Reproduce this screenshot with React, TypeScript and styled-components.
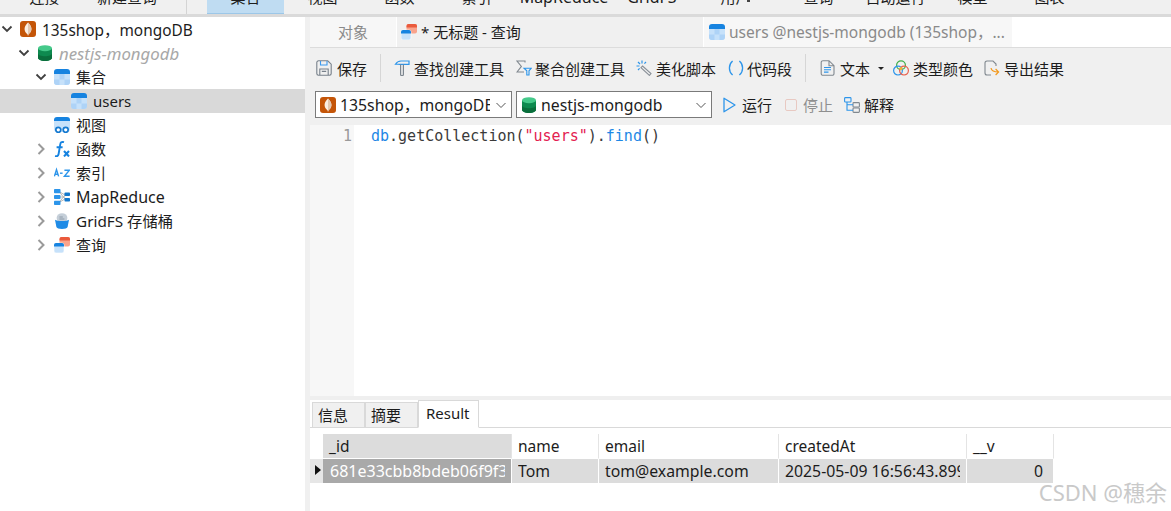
import React from 'react';
import styled, { createGlobalStyle } from 'styled-components';

const GlobalStyle = createGlobalStyle`
  html, body {
    margin: 0;
    padding: 0;
    background: #ffffff;
  }
  body {
    font-family: "Noto Sans", "Noto Sans CJK SC", sans-serif;
    font-size: 15px;
    color: #1c1c1c;
  }
`;

/* ---------- icons ---------- */

const MongoIcon = () => (
  <svg width="16" height="16" viewBox="0 0 16 16">
    <rect x="0" y="0" width="16" height="16" rx="3" fill="#c45508" />
    <path d="M8 1.5C5.2 4.2 4.4 6.5 4.6 8.6 4.8 11 6.4 12.6 7.6 13.4L8 15l.4-1.6c1.2-.8 2.8-2.4 3-4.8.2-2.1-.6-4.4-3.4-7.1z" fill="#fbeee2" />
    <path d="M8 1.5v13.5l.4-1.6c1.2-.8 2.8-2.4 3-4.8.2-2.1-.6-4.4-3.4-7.1z" fill="#e3c9b2" />
  </svg>
);

const DbIcon = () => (
  <svg width="16" height="16" viewBox="0 0 16 16">
    <path d="M1 3.2v9.6C1 14.6 4.2 16 8 16s7-1.4 7-3.2V3.2z" fill="#0e8a4f" />
    <path d="M1 8.2v4.6C1 14.6 4.2 16 8 16s7-1.4 7-3.2V8.2C15 10 11.8 11.2 8 11.2S1 10 1 8.2z" fill="#0a6e3c" />
    <ellipse cx="8" cy="3.2" rx="7" ry="3" fill="#45c98a" />
  </svg>
);

const TableIcon = () => (
  <svg width="16" height="16" viewBox="0 0 16 16">
    <path d="M0 5h16v8a3 3 0 0 1-3 3H3a3 3 0 0 1-3-3z" fill="#c6e1fa" />
    <path d="M5.5 5h5v5.5h-5z" fill="#aed3f7" />
    <path d="M0 10.5h5.5V16H3a3 3 0 0 1-3-3zM10.5 10.5H16V13a3 3 0 0 1-3 3h-2.5z" fill="#aed3f7" />
    <path d="M3 0h10a3 3 0 0 1 3 3v2H0V3a3 3 0 0 1 3-3z" fill="#1683e0" />
  </svg>
);

const ViewIcon = () => (
  <svg width="16" height="16" viewBox="0 0 16 16">
    <path d="M0 4h16v8a3 3 0 0 1-3 3H3a3 3 0 0 1-3-3z" fill="#c6e1fa" />
    <path d="M3 0h10a3 3 0 0 1 3 3v1H0V3a3 3 0 0 1 3-3z" fill="#1683e0" />
    <circle cx="4.3" cy="12.8" r="2.5" fill="#fff" stroke="#1479d0" strokeWidth="1.7" />
    <circle cx="11.7" cy="12.8" r="2.5" fill="#fff" stroke="#1479d0" strokeWidth="1.7" />
  </svg>
);

const FxIcon = () => (
  <svg width="16" height="16" viewBox="0 0 16 16" fill="none">
    <path d="M10 1.2C7.4.4 6.6 1.6 6.2 3.6L4.6 13c-.3 1.8-1.4 2.5-3.6 2.1M2.6 6.2h6" stroke="#1683e0" strokeWidth="1.9" />
    <path d="M10 10l5 5.4M15 10l-5 5.4" stroke="#1683e0" strokeWidth="2.1" />
  </svg>
);

const SortIcon = () => (
  <svg width="16" height="16" viewBox="0 0 16 16" fill="none" stroke="#2d95ea" strokeWidth="1.4">
    <path d="M.4 11.4 2.5 4.6l2.1 6.8M1 9.2h3" />
    <path d="M6 8.2h2.6" />
    <path d="M10.4 5.2h5l-5 6h5.2" />
  </svg>
);

const MapReduceIcon = () => (
  <svg width="16" height="16" viewBox="0 0 16 16" fill="none">
    <path d="M5 2.5 11 6M5 8h6M5 13.5 11 10M5 2.5 11 10M5 13.5 11 6" stroke="#b0b0b0" strokeWidth=".9" />
    <rect x="0" y="0" width="6.5" height="4.2" rx=".8" fill="#2c95ea" />
    <rect x="0" y="5.9" width="6.5" height="4.2" rx=".8" fill="#2c95ea" />
    <rect x="0" y="11.8" width="6.5" height="4.2" rx=".8" fill="#2c95ea" />
    <rect x="10.5" y="3.4" width="5.5" height="3.6" rx=".8" fill="#1478cc" />
    <rect x="10.5" y="9" width="5.5" height="3.6" rx=".8" fill="#1478cc" />
  </svg>
);

const BucketIcon = () => (
  <svg width="16" height="16" viewBox="0 0 16 16">
    <ellipse cx="8" cy="5" rx="5.4" ry="4.8" fill="#c4ced8" />
    <path d="M5.4 4h3.4M5.4 6h5" stroke="#7f8e9c" strokeWidth=".8" />
    <path d="M1 6.8c2 1.6 12 1.6 14 0l-1.4 7.2c-.3 1.3-2.6 2-5.6 2s-5.3-.7-5.6-2z" fill="#1f8be6" />
  </svg>
);

const QueryIcon = () => (
  <svg width="16" height="16" viewBox="0 0 16 16">
    <rect x="5.5" y="0" width="10.5" height="9.5" rx="2" fill="#f9a38c" />
    <path d="M7.5 0h6.5a2 2 0 0 1 2 2v1.4H5.5V2a2 2 0 0 1 2-2z" fill="#ea5a3c" />
    <rect x="0" y="6" width="10" height="10" rx="2" fill="#c6e1fa" stroke="#fff" strokeWidth=".6" />
    <path d="M2 6h6a2 2 0 0 1 2 2v1.5H0V8a2 2 0 0 1 2-2z" fill="#1683e0" />
  </svg>
);

const SaveIcon = () => (
  <svg width="16" height="16" viewBox="0 0 16 16" fill="none" stroke="#77808a" strokeWidth="1.1">
    <path d="M2.5.8h9.2l3.5 3.4v9.3a1.7 1.7 0 0 1-1.7 1.7H2.5A1.7 1.7 0 0 1 .8 13.5V2.5A1.7 1.7 0 0 1 2.5.8z" />
    <path d="M4.5 1v4h6.5V1" stroke="#3b9af0" />
    <path d="M3.8 15V9h8.4v6M5.8 11.4h4.4" />
  </svg>
);

const HammerIcon = () => (
  <svg width="16" height="16" viewBox="0 0 16 16" fill="none">
    <path d="M1.5 4.2C3 1.6 5 1 7 1h8v3.4H6C4.4 4.4 3 4 1.5 4.2z" stroke="#2d95ea" strokeWidth="1.2" />
    <path d="M6.6 4.6v10a1 1 0 0 0 1 1h.8a1 1 0 0 0 1-1v-10" stroke="#7d868f" strokeWidth="1.2" />
  </svg>
);

const SigmaFilterIcon = () => (
  <svg width="16" height="16" viewBox="0 0 16 16" fill="none">
    <path d="M9 2.5V1H1l4.4 5.4L1 12h7" stroke="#80888f" strokeWidth="1.1" />
    <path d="M8 8.2h7.4L13 10.8v4.2h-2.2v-4.2z" stroke="#2d95ea" strokeWidth="1.1" />
  </svg>
);

const WandIcon = () => (
  <svg width="16" height="16" viewBox="0 0 16 16" fill="none">
    <path d="M6.5 6 15 13.6 13.4 15.4 5 7.6z" stroke="#8a9199" strokeWidth="1.1" />
    <path d="M6 .5v3M.5 6h3M2 2l2 2M10 2 8.4 3.6M2 10l1.6-1.6" stroke="#2d95ea" strokeWidth="1.2" />
  </svg>
);

const SnippetIcon = () => (
  <svg width="16" height="16" viewBox="0 0 16 16" fill="none" stroke="#2d95ea" strokeWidth="1.3">
    <path d="M4.6 1C2 3.2 1.4 5.6 1.4 8s.6 4.8 3.2 7" />
    <path d="M11.4 1c2.6 2.2 3.2 4.6 3.2 7s-.6 4.8-3.2 7" />
  </svg>
);

const DocIcon = () => (
  <svg width="15" height="16" viewBox="0 0 15 16" fill="none">
    <path d="M3 .7h6l5 5v7.8a1.8 1.8 0 0 1-1.8 1.8H3a1.8 1.8 0 0 1-1.8-1.8V2.5A1.8 1.8 0 0 1 3 .7zM9 .7v5h5" stroke="#80888f" strokeWidth="1.1" />
    <path d="M4 7.5h7M4 9.8h7M4 12.1h4.5" stroke="#2d95ea" strokeWidth="1.1" />
  </svg>
);

const ColorsIcon = () => (
  <svg width="16" height="16" viewBox="0 0 16 16" fill="none" strokeWidth="1.2">
    <circle cx="8" cy="5.2" r="4.4" stroke="#3fae49" />
    <circle cx="5" cy="10.6" r="4.4" stroke="#2d95ea" />
    <circle cx="11" cy="10.6" r="4.4" stroke="#e8604c" />
    <circle cx="8" cy="8.6" r="1.6" fill="#f2b632" />
  </svg>
);

const ExportIcon = () => (
  <svg width="16" height="16" viewBox="0 0 16 16" fill="none">
    <path d="M7 15H3a2 2 0 0 1-2-2V3a2 2 0 0 1 2-2h6l3 3v2" stroke="#80888f" strokeWidth="1.1" />
    <path d="M7 8c.4 2.6 2.4 4 7.5 4M11.6 9l3 3-3 3" stroke="#f39a1f" strokeWidth="1.2" />
  </svg>
);

const RunIcon = () => (
  <svg width="13" height="16" viewBox="0 0 13 16" fill="none">
    <path d="M1 1.2 12 8 1 14.8z" stroke="#2d95ea" strokeWidth="1.3" strokeLinejoin="round" />
  </svg>
);

const StopIcon = () => (
  <svg width="12" height="12" viewBox="0 0 12 12" fill="none">
    <rect x=".5" y=".5" width="11" height="11" rx="1.5" stroke="#e8c9c2" />
  </svg>
);

const ExplainIcon = () => (
  <svg width="16" height="16" viewBox="0 0 16 16" fill="none" strokeWidth="1.1">
    <rect x=".6" y=".6" width="6.4" height="4.4" rx=".8" stroke="#2d95ea" />
    <rect x="9" y="5.6" width="6.4" height="4.4" rx=".8" stroke="#80888f" />
    <rect x="9" y="11" width="6.4" height="4.4" rx=".8" stroke="#80888f" />
    <path d="M3 5v8.2h6M3 7.8h6" stroke="#2d95ea" />
  </svg>
);

const Chevron = ({ open }: { open: boolean }) => (
  <svg width="12" height="12" viewBox="0 0 12 12" fill="none">
    {open ? (
      <path d="M1.5 3.5 6 8l4.5-4.5" stroke="#404040" strokeWidth="1.8" />
    ) : (
      <path d="M3.5 1 8.5 6l-5 5" stroke="#9a9a9a" strokeWidth="2" />
    )}
  </svg>
);

const SelectArrow = () => (
  <svg width="12" height="12" viewBox="0 0 12 12" fill="none">
    <path d="M1.5 4 6 8.5 10.5 4" stroke="#555" strokeWidth="1" />
  </svg>
);

/* ---------- data ---------- */

const ribbonItems = [
  { label: '连接', width: 77 },
  { label: '新建查询', width: 88 },
  { label: '', width: 36, divider: true },
  { label: '集合', width: 77, active: true },
  { label: '视图', width: 77 },
  { label: '函数', width: 77 },
  { label: '索引', width: 77 },
  { label: 'MapReduce', width: 98, size: 16 },
  { label: 'GridFS', width: 78, size: 16 },
  { label: '用户', width: 89, caret: true },
  { label: '查询', width: 77 },
  { label: '自动运行', width: 77 },
  { label: '模型', width: 77 },
  { label: '图表', width: 77 },
];

const treeRows = [
  { depth: 0, chevron: 'open', icon: <MongoIcon />, label: '135shop，mongoDB', size: 15.4 },
  { depth: 1, chevron: 'open', icon: <DbIcon />, label: 'nestjs-mongodb', muted: true, size: 16.8 },
  { depth: 2, chevron: 'open', icon: <TableIcon />, label: '集合', lift: true },
  { depth: 3, icon: <TableIcon />, label: 'users', selected: true },
  { depth: 2, icon: <ViewIcon />, label: '视图', lift: true },
  { depth: 2, chevron: 'closed', icon: <FxIcon />, label: '函数', lift: true },
  { depth: 2, chevron: 'closed', icon: <SortIcon />, label: '索引', lift: true },
  { depth: 2, chevron: 'closed', icon: <MapReduceIcon />, label: 'MapReduce', size: 16 },
  { depth: 2, chevron: 'closed', icon: <BucketIcon />, label: 'GridFS 存储桶', size: 15.3, lift: true },
  { depth: 2, chevron: 'closed', icon: <QueryIcon />, label: '查询', lift: true },
];

/* ---------- component ---------- */

export default function App() {
  return (
    <Page>
      <GlobalStyle />
      <Ribbon>
        {ribbonItems.map((item, i) =>
          item.divider ? (
            <RibbonDivider key={i} $width={item.width} />
          ) : (
            <RibbonItem key={i} $width={item.width} $active={item.active} $caret={item.caret}>
              <RibbonText $size={item.size}>{item.label}</RibbonText>
            </RibbonItem>
          ),
        )}
      </Ribbon>

      <Body>
        <Sidebar>
          {treeRows.map((row) => (
            <TreeRow key={row.label + row.depth} $depth={row.depth} $selected={row.selected}>
              <ChevronSlot>
                {row.chevron && <Chevron open={row.chevron === 'open'} />}
              </ChevronSlot>
              {row.icon}
              <TreeLabel $muted={row.muted} $size={row.size} $lift={row.lift}>{row.label}</TreeLabel>
            </TreeRow>
          ))}
        </Sidebar>

        <Main>
          <TabBar>
            <ObjectTab><TabLabel>对象</TabLabel></ObjectTab>
            <QueryTab>
              <QueryIcon />
              <TabLabel>* 无标题 - 查询</TabLabel>
            </QueryTab>
            <PeerTab>
              <TableIcon />
              <TabLabel $size={15.5}>users @nestjs-mongodb (135shop，...</TabLabel>
            </PeerTab>
          </TabBar>

          <ToolRow>
            <ToolButton><SaveIcon />保存</ToolButton>
            <ToolDivider $right={13} />
            <ToolButton $gap={4}><HammerIcon />查找创建工具</ToolButton>
            <ToolButton $gap={3} $left={12}><SigmaFilterIcon />聚合创建工具</ToolButton>
            <ToolButton $gap={4} $left={11}><WandIcon />美化脚本</ToolButton>
            <ToolButton $gap={3} $left={12}><SnippetIcon />代码段</ToolButton>
            <ToolDivider $right={14} />
            <ToolButton><DocIcon />文本</ToolButton>
            <DropCaret />
            <ToolButton $gap={4} $left={9}><ColorsIcon />类型颜色</ToolButton>
            <ToolButton $gap={4} $left={11}><ExportIcon />导出结果</ToolButton>
          </ToolRow>

          <SelectRow>
            <SelectBox $width={197}>
              <MongoIcon />
              <SelectText $size={15.8}>135shop，mongoDB</SelectText>
              <SelectArrow />
            </SelectBox>
            <SelectBox $width={196}>
              <DbIcon />
              <SelectText $size={15.8}>nestjs-mongodb</SelectText>
              <SelectArrow />
            </SelectBox>
            <ToolButton $gap={6} $left={7}><RunIcon />运行</ToolButton>
            <ToolButton $gap={6} $left={9} $disabled><StopIcon />停止</ToolButton>
            <ToolButton $gap={4} $left={7}><ExplainIcon />解释</ToolButton>
          </SelectRow>

          <Editor>
            <Gutter>1</Gutter>
            <CodeLine>
              <Keyword>db</Keyword>.getCollection(<StringLit>"users"</StringLit>).<Keyword>find</Keyword>()
            </CodeLine>
          </Editor>

          <ResultTabs>
            <ResultTab>信息</ResultTab>
            <ResultTab>摘要</ResultTab>
            <ResultTab $active>Result</ResultTab>
          </ResultTabs>

          <ResultArea>
            <Grid>
              <CornerCell />
              <HeadCell $key>_id</HeadCell>
              <HeadCell>name</HeadCell>
              <HeadCell>email</HeadCell>
              <HeadCell>createdAt</HeadCell>
              <HeadCell>__v</HeadCell>

              <MarkerCell />
              <IdCell><CellText>681e33cbb8bdeb06f9f3</CellText></IdCell>
              <DataCell><CellText>Tom</CellText></DataCell>
              <DataCell><CellText>tom@example.com</CellText></DataCell>
              <DataCell><CellText>2025-05-09 16:56:43.899</CellText></DataCell>
              <DataCell $right><CellText>0</CellText></DataCell>
            </Grid>
          </ResultArea>
        </Main>
      </Body>

      <Watermark>CSDN @穗余</Watermark>
    </Page>
  );
}

/* ---------- styles ---------- */

const Page = styled.div`
  position: relative;
  width: 1171px;
  height: 511px;
  overflow: hidden;
  display: flex;
  flex-direction: column;
  background: #ffffff;
`;

const Ribbon = styled.div`
  flex: none;
  height: 14px;
  display: flex;
  padding-left: 6px;
  background: #f0f0f0;
  border-bottom: 3px solid #dadada;
  overflow: hidden;
`;

const RibbonItem = styled.div<{ $width: number; $active?: boolean; $caret?: boolean }>`
  position: relative;
  flex: none;
  width: ${(p) => p.$width}px;
  height: 14px;
  display: flex;
  justify-content: center;
  overflow: hidden;
  box-sizing: border-box;
  background: ${(p) => (p.$active ? '#bfdcf2' : 'transparent')};
  border-bottom: ${(p) => (p.$active ? '1px solid #9cc7e8' : 'none')};

  ${(p) =>
    p.$caret &&
    `&::after {
      content: '';
      position: absolute;
      left: 56px;
      top: 0;
      width: 3px;
      height: 2px;
      background: #444444;
    }`}
`;

const RibbonText = styled.span<{ $size?: number }>`
  margin-top: -13px;
  line-height: 20px;
  white-space: nowrap;
  font-size: ${(p) => p.$size ?? 15}px;
`;

const RibbonDivider = styled.div<{ $width: number }>`
  flex: none;
  width: ${(p) => p.$width}px;
  height: 14px;
  background: linear-gradient(#d4d4d4, #d4d4d4) 15px 0 / 1px 14px no-repeat;
`;

const Body = styled.div`
  flex: 1;
  min-height: 0;
  display: flex;
`;

const Sidebar = styled.div`
  flex: none;
  width: 305px;
  background: #ffffff;
`;

const TreeRow = styled.div<{ $depth: number; $selected?: boolean }>`
  height: 24px;
  display: flex;
  align-items: center;
  padding-left: ${(p) => p.$depth * 17}px;
  background: ${(p) => (p.$selected ? '#d9d9d9' : 'transparent')};
`;

const ChevronSlot = styled.span`
  flex: none;
  width: 14px;
  margin-right: 6px;
  display: flex;
  justify-content: center;
`;

const TreeLabel = styled.span<{ $muted?: boolean; $size?: number; $lift?: boolean }>`
  margin-left: 6px;
  padding-bottom: ${(p) => (p.$lift ? 2 : 0)}px;
  white-space: nowrap;
  font-size: ${(p) => p.$size ?? 15}px;
  font-style: ${(p) => (p.$muted ? 'italic' : 'normal')};
  color: ${(p) => (p.$muted ? '#a8a8a8' : '#1c1c1c')};
`;

const Main = styled.div`
  flex: 1;
  min-width: 0;
  display: flex;
  flex-direction: column;
  border-left: 5px solid #f0f0f0;
`;

const TabBar = styled.div`
  flex: none;
  height: 30px;
  display: flex;
  gap: 1px;
  background: #ffffff;
  border-bottom: 1px solid #dcdcdc;
`;

const TabLabel = styled.span<{ $size?: number }>`
  padding-bottom: 2px;
  font-size: ${(p) => p.$size ?? 15}px;
`;

const ObjectTab = styled.div`
  flex: none;
  width: 86px;
  display: flex;
  align-items: center;
  justify-content: center;
  background: #f7f7f7;
  color: #8a8a8a;
`;

const QueryTab = styled.div`
  flex: none;
  width: 306px;
  box-sizing: border-box;
  padding-left: 4px;
  display: flex;
  align-items: center;
  gap: 4px;
  background: #f0f0f0;
`;

const PeerTab = styled.div`
  flex: none;
  width: 308px;
  box-sizing: border-box;
  padding-left: 5px;
  display: flex;
  align-items: center;
  gap: 4px;
  background: #f7f7f7;
  color: #8a8a8a;
  white-space: nowrap;
`;

const ToolRow = styled.div`
  flex: none;
  height: 40px;
  display: flex;
  align-items: center;
  padding-left: 6px;
  background: #f0f0f0;
`;

const ToolButton = styled.div<{ $gap?: number; $left?: number; $disabled?: boolean }>`
  flex: none;
  display: flex;
  align-items: center;
  gap: ${(p) => p.$gap ?? 5}px;
  margin-left: ${(p) => p.$left ?? 0}px;
  white-space: nowrap;
  color: ${(p) => (p.$disabled ? '#8f8f8f' : '#1c1c1c')};
`;

const ToolDivider = styled.div<{ $right: number }>`
  flex: none;
  width: 1px;
  height: 28px;
  margin: 0 ${(p) => p.$right}px 0 13px;
  background: #d6d6d6;
`;

const DropCaret = styled.span`
  flex: none;
  width: 0;
  height: 0;
  margin-left: 8px;
  border-left: 3px solid transparent;
  border-right: 3px solid transparent;
  border-top: 3px solid #222222;
`;

const SelectRow = styled.div`
  flex: none;
  height: 37px;
  display: flex;
  align-items: center;
  gap: 4px;
  padding: 0 0 4px 5px;
  box-sizing: border-box;
  background: #f0f0f0;
`;

const SelectBox = styled.div<{ $width: number }>`
  flex: none;
  width: ${(p) => p.$width}px;
  height: 27px;
  box-sizing: border-box;
  display: flex;
  align-items: center;
  gap: 4px;
  padding: 0 4px;
  background: #ffffff;
  border: 1px solid #7a7a7a;
`;

const SelectText = styled.span<{ $size: number }>`
  flex: 1;
  min-width: 0;
  overflow: hidden;
  white-space: nowrap;
  margin-right: 1px;
  font-size: ${(p) => p.$size}px;
`;

const Editor = styled.div`
  flex: none;
  height: 271px;
  display: flex;
  background: #ffffff;
`;

const Gutter = styled.div`
  flex: none;
  width: 44px;
  box-sizing: border-box;
  padding-right: 2px;
  text-align: right;
  font-family: "DejaVu Sans Mono", monospace;
  font-size: 15px;
  line-height: 22px;
  color: #9a9a9a;
  background: #f7f7f7;
`;

const CodeLine = styled.div`
  margin-left: 17px;
  font-family: "DejaVu Sans Mono", monospace;
  font-size: 15px;
  line-height: 22px;
  color: #3a3a3a;
  white-space: pre;
`;

const Keyword = styled.span`
  color: #1e88e5;
`;

const StringLit = styled.span`
  color: #e3204f;
`;

const ResultTabs = styled.div`
  flex: none;
  height: 32px;
  box-sizing: border-box;
  display: flex;
  align-items: flex-end;
  padding-left: 2px;
  border-top: 4px solid #efefef;
  border-bottom: 1px solid #d9d9d9;
`;

const ResultTab = styled.div<{ $active?: boolean }>`
  flex: none;
  box-sizing: border-box;
  width: ${(p) => (p.$active ? 61 : 53)}px;
  height: ${(p) => (p.$active ? 28 : 25)}px;
  margin-bottom: ${(p) => (p.$active ? -1 : 0)}px;
  padding-left: ${(p) => (p.$active ? 7 : 5)}px;
  padding-bottom: ${(p) => (p.$active ? 3 : 2)}px;
  display: flex;
  align-items: center;
  background: ${(p) => (p.$active ? '#ffffff' : '#f0f0f0')};
  border: 1px solid #d9d9d9;
  border-bottom: ${(p) => (p.$active ? '1px solid #ffffff' : 'none')};
`;

const ResultArea = styled.div`
  flex: 1;
  padding-top: 6px;
  background: #ffffff;
`;

const Grid = styled.div`
  display: grid;
  grid-template-columns: 13px 189px 87px 180px 188px 87px;
  grid-auto-rows: 25px;
  width: 744px;
`;

const CornerCell = styled.div`
  background: #ffffff;
`;

const HeadCell = styled.div<{ $key?: boolean }>`
  box-sizing: border-box;
  padding-left: 6px;
  line-height: 25px;
  font-size: 15.5px;
  background: ${(p) => (p.$key ? '#dcdcdc' : '#ffffff')};
  border-right: 1px solid #e4e4e4;
  border-bottom: 1px solid #ffffff;
`;

const MarkerCell = styled.div`
  position: relative;
  background: #e6e6e6;
  border-bottom: 1px solid #ffffff;

  &::after {
    content: '';
    position: absolute;
    left: 5px;
    top: 6px;
    border-left: 6px solid #111111;
    border-top: 5px solid transparent;
    border-bottom: 5px solid transparent;
  }
`;

const CellText = styled.span`
  display: block;
  overflow: hidden;
  white-space: nowrap;
`;

const IdCell = styled.div`
  box-sizing: border-box;
  padding: 0 6px 0 7px;
  line-height: 24px;
  font-size: 16px;
  color: #ffffff;
  background: #a9a9a9;
  border-right: 1px solid #ffffff;
  border-bottom: 1px solid #ffffff;
`;

const DataCell = styled.div<{ $right?: boolean }>`
  box-sizing: border-box;
  padding: 0 ${(p) => (p.$right ? 10 : 6)}px 0 6px;
  line-height: 24px;
  font-size: 15.8px;
  text-align: ${(p) => (p.$right ? 'right' : 'left')};
  background: #dcdcdc;
  border-right: 1px solid #ffffff;
  border-bottom: 1px solid #ffffff;
`;

const Watermark = styled.div`
  position: absolute;
  right: 4px;
  bottom: 7px;
  font-size: 22px;
  line-height: 24px;
  color: #c9c9c9;
  white-space: nowrap;
`;
